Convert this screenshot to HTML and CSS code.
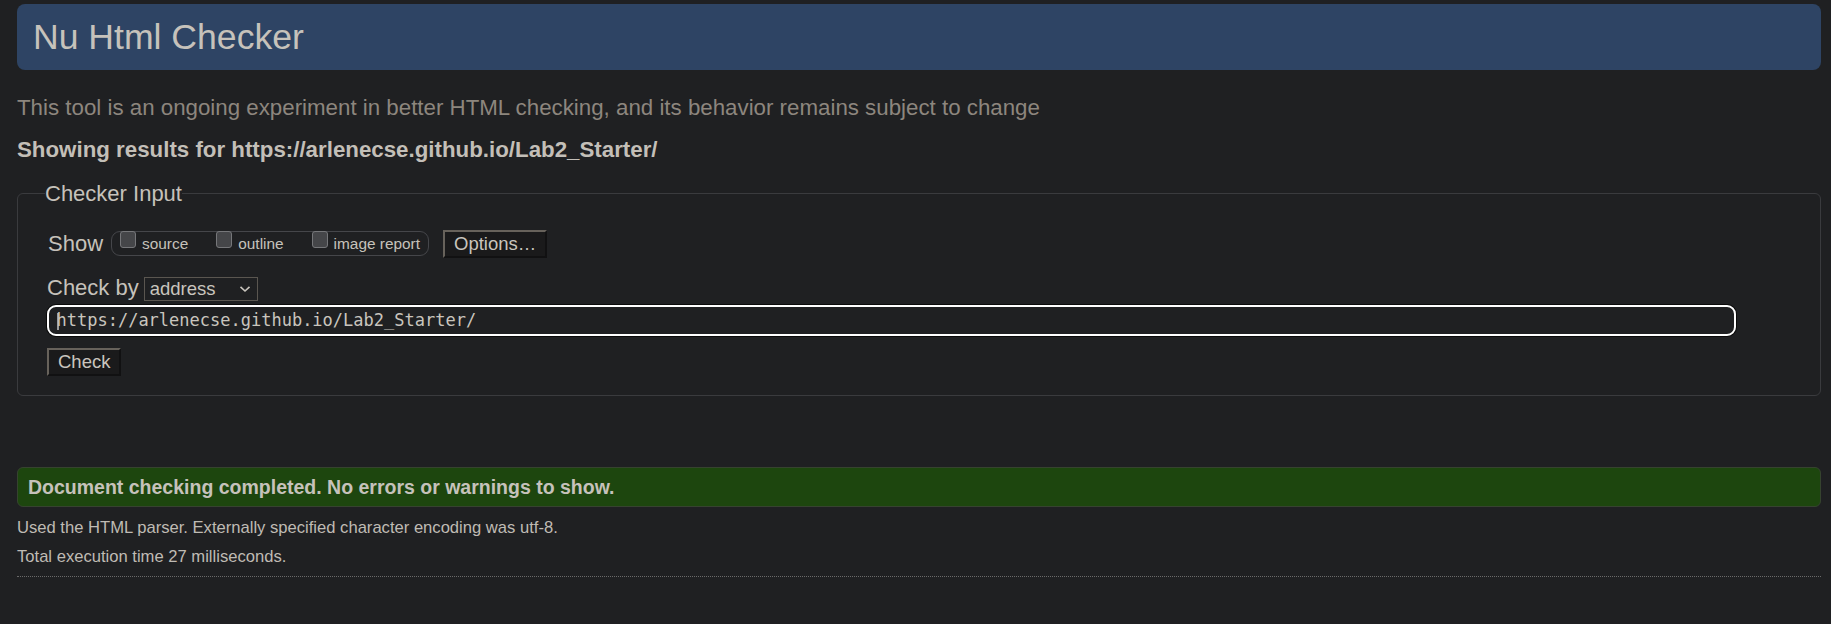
FILE: index.html
```html
<!DOCTYPE html>
<html lang="en">
<head>
<meta charset="utf-8">
<title>Nu Html Checker</title>
<link rel="stylesheet" href="styles.css">
</head>
<body>
<header class="masthead"><h1 class="masthead-title">Nu Html Checker</h1></header>
<p class="tagline">This tool is an ongoing experiment in better HTML checking, and its behavior remains subject to change</p>
<p class="results-for">Showing results for https://arlenecse.github.io/Lab2_Starter/</p>
<fieldset class="checker">
  <legend class="checker-legend">Checker Input</legend>
  <div class="show-row">
    <span class="row-label">Show</span>
    <div class="options-group">
      <label class="opt"><span class="box"></span>source</label>
      <label class="opt"><span class="box"></span>outline</label>
      <label class="opt"><span class="box"></span>image report</label>
    </div>
    <button class="btn btn-options" type="button">Options…</button>
  </div>
  <div class="by-row">
    <span class="row-label">Check by</span>
    <div class="select"><span class="select-value">address</span><svg class="chevron" width="12" height="8" viewBox="0 0 12 8"><path d="M1.5 1.8 L6 6 L10.5 1.8" fill="none" stroke="#c9c5be" stroke-width="1.6"/></svg></div>
  </div>
  <div class="url-field"><span class="caret"></span>https://arlenecse.github.io/Lab2_Starter/</div>
  <button class="btn btn-check" type="button">Check</button>
</fieldset>
<div class="success">Document checking completed. No errors or warnings to show.</div>
<p class="meta meta-first">Used the HTML parser. Externally specified character encoding was utf-8.</p>
<p class="meta">Total execution time 27 milliseconds.</p>
<hr class="rule">
</body>
</html>
```
FILE: styles.css
```css
html { background: #1f2022; }
body {
  margin: 0;
  padding: 4px 10px 40px 17px;
  background: #1f2022;
  color: #c9c5be;
  font-family: "Liberation Sans", Arial, sans-serif;
}
.masthead {
  height: 66px;
  background: #2e4464;
  border-radius: 8px;
  padding-left: 16px;
}
.masthead-title {
  margin: 0;
  font-size: 35.6px;
  font-weight: normal;
  line-height: 66px;
  color: #c6c2bb;
}
.tagline {
  margin: 25px 0 0;
  font-size: 22.3px;
  line-height: 25px;
  color: #8d867e;
}
.results-for {
  margin: 17px 0 0;
  font-size: 22.3px;
  line-height: 25px;
  font-weight: bold;
  color: #c3bfb8;
}
.checker {
  margin: 18.5px 0 0;
  padding: 24px 29px 19.5px;
  border: 1px solid #3a3b3e;
  border-radius: 6px;
  min-width: 0;
}
.checker-legend {
  padding: 0;
  margin-left: -2px;
  font-size: 22px;
  line-height: 25px;
  color: #c6c2bb;
}
.row-label {
  font-size: 22px;
  line-height: 25px;
  color: #c6c2bb;
}
.show-row {
  display: flex;
  align-items: center;
  height: 28px;
}
.show-row .row-label { margin-left: 1px; }
.options-group {
  display: flex;
  align-items: flex-start;
  height: 23px;
  margin-left: 8px;
  padding: 0 8px 0 8px;
  border: 1px solid #45464a;
  border-radius: 9px;
}
.opt {
  display: flex;
  align-items: flex-start;
  font-size: 15.4px;
  line-height: 23px;
  color: #c6c2bb;
  margin-right: 28px;
}
.opt:last-child { margin-right: 0; }
.box {
  width: 14px;
  height: 15px;
  margin-top: -1px;
  margin-right: 6px;
  background: #454649;
  border: 1px solid #76777a;
  border-radius: 3px;
}
.btn {
  font-family: "Liberation Sans", Arial, sans-serif;
  font-size: 18.5px;
  line-height: 22px;
  color: #c9c5be;
  background: #1a1a1b;
  border: 2px solid;
  border-color: #67625b #111112 #111112 #67625b;
  padding: 0 9px;
  height: 28px;
}
.btn-options { margin-left: 14px; }
.by-row {
  display: flex;
  align-items: flex-start;
  margin-top: 17.5px;
}
.select {
  display: flex;
  align-items: center;
  margin-top: 2px;
  margin-left: 5px;
  width: 107px;
  height: 22px;
  border: 1px solid #5a5650;
  padding-left: 5px;
  box-sizing: content-box;
}
.select-value {
  flex: 1;
  font-size: 18.5px;
  line-height: 22px;
  color: #c9c5be;
}
.chevron { margin-right: 6px; }
.url-field {
  margin-top: 4px;
  width: 96.2%;
  height: 27px;
  border: 2px solid #ffffff;
  border-radius: 9px;
  box-shadow: 0 0 0 1px #0a0a0a;
  padding-left: 7.5px;
  box-sizing: content-box;
  font-family: "DejaVu Sans Mono", "Liberation Mono", monospace;
  font-size: 17px;
  line-height: 27px;
  color: #c9c5be;
  white-space: nowrap;
}
.caret {
  display: inline-block;
  width: 2px;
  height: 17px;
  margin-right: -2px;
  vertical-align: -4px;
  background: #9c9c9c;
}
.btn-check {
  display: block;
  margin-top: 11.5px;
}
.success {
  margin-top: 71px;
  height: 38px;
  line-height: 38px;
  padding-left: 10px;
  border: 1px solid #36432f;
  border-radius: 6px;
  background: #1d460e;
  color: #c6c2bb;
  font-size: 19.5px;
  font-weight: bold;
}
.meta {
  margin: 9px 0 0;
  font-size: 16.6px;
  line-height: 20px;
  color: #bfbbb4;
}
.meta-first { margin-top: 11px; }
.rule {
  margin: 9px 0 0;
  height: 0;
  border: 0;
  border-top: 1px dotted #6a6a6a;
}
```
